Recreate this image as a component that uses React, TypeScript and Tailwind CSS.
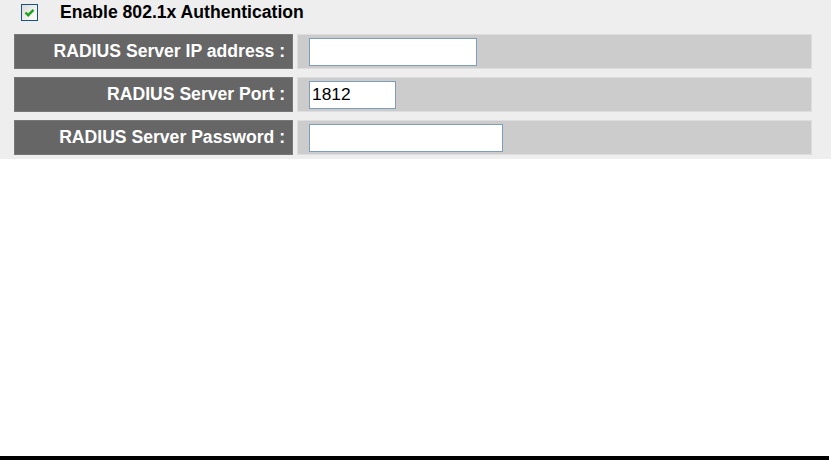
const rows = [
  { label: "RADIUS Server IP address :", value: "", width: "w-[168px]" },
  { label: "RADIUS Server Port :", value: "1812", width: "w-[87px]" },
  { label: "RADIUS Server Password :", value: "", width: "w-[194px]" },
];

export default function App() {
  return (
    <div className="w-[831px] h-[460px] bg-white flex flex-col font-['Liberation_Sans',Arial,sans-serif]">
      <div className="bg-[#eeeeee] pt-[4px] pb-[4px] pl-[14px] pr-[19px]">
        <div className="flex items-center h-[17px] pl-[7px]">
          <div className="w-[17px] h-[17px] border border-[#1c5180] bg-gradient-to-br from-[#dcdcd7] to-white flex items-center justify-center">
            <svg width="13" height="13" viewBox="0 0 13 13">
              <path d="M2.5 6.5 L5.2 9.2 L10.5 3.8" fill="none" stroke="#21a121" strokeWidth="2.4" />
            </svg>
          </div>
          <span className="ml-[22px] text-[17.6px] font-bold text-black leading-none">
            Enable 802.1x Authentication
          </span>
        </div>

        <div className="mt-[13px] flex flex-col gap-[8px]">
          {rows.map((r) => (
            <div key={r.label} className="flex h-[35px] gap-[4px]">
              <div className="w-[279px] bg-[#666666] border border-[#777777] flex items-center justify-end pr-[7px] text-white font-bold text-[17.6px]">
                {r.label}
              </div>
              <div className="flex-1 bg-[#cccccc] border border-[#dddddd] flex items-center pl-[11px]">
                <input
                  defaultValue={r.value}
                  className={`${r.width} h-[28px] bg-white border border-[#7f9db9] px-[2px] text-[17.4px] text-black outline-none`}
                />
              </div>
            </div>
          ))}
        </div>
      </div>
      <div className="flex-1" />
      <div className="h-[4px] w-[829px] bg-black" />
    </div>
  );
}
